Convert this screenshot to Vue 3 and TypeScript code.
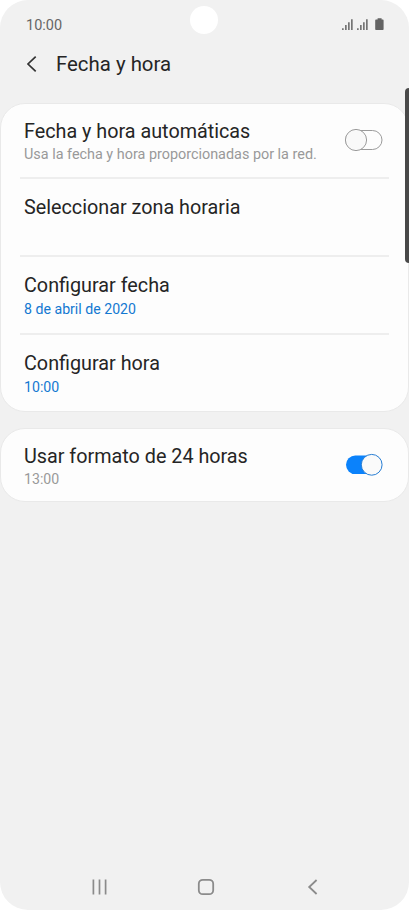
<script setup lang="ts">
interface Setting {
  id: string
  title: string
  detail: string
  accent?: boolean
  on?: boolean
}

const groups: Setting[][] = [
  [
    { id: 'auto', title: 'Fecha y hora automáticas', detail: 'Usa la fecha y hora proporcionadas por la red.', on: false },
    { id: 'zone', title: 'Seleccionar zona horaria', detail: '' },
    { id: 'date', title: 'Configurar fecha', detail: '8 de abril de 2020', accent: true },
    { id: 'time', title: 'Configurar hora', detail: '10:00', accent: true },
  ],
  [{ id: 'format', title: 'Usar formato de 24 horas', detail: '13:00', on: true }],
]
</script>

<template>
  <div class="phone">
    <div class="status">
      <span class="clock">10:00</span>
      <svg class="indicators" width="44" height="14" viewBox="0 0 44 14">
        <g fill="#757575">
          <path d="M1 10.2h1.7V12H1zM4 7.1h1.7V12H4zM7 4.2h1.7V12H7zM10 1.2h1.7V12H10z" />
          <path d="M16 10.2h1.7V12H16zM19 7.1h1.7V12H19zM22 4.2h1.7V12H22zM25 1.2h1.7V12H25z" />
        </g>
        <path fill="#636363" d="M36.6 .3h4v1.3h1.2q.8 0 .8.8v8.8q0 .8-.8.8h-6.8q-.8 0-.8-.8V2.400q0-.8.8-.8h1.6z" />
      </svg>
    </div>
    <div class="camera"></div>
    <div class="edge"></div>

    <header class="header">
      <svg class="back" width="12" height="18" viewBox="0 0 12 18">
        <path d="M9.700 1.700 2 9l7.700 7.300" fill="none" stroke="#333" stroke-width="1.700" />
      </svg>
      <h1>Fecha y hora</h1>
    </header>

    <main class="groups">
      <section v-for="(group, i) in groups" :key="i" class="card">
        <div v-for="item in group" :key="item.id" class="row" :class="'row-' + item.id">
          <div class="texts">
            <div class="title">{{ item.title }}</div>
            <div class="detail" :class="{ accent: item.accent }">{{ item.detail }}</div>
          </div>
          <svg v-if="item.on !== undefined" class="switch" width="40" height="24" viewBox="0 0 40 24">
            <template v-if="item.on">
              <rect x="2" y="2.500" width="36" height="18.600" rx="9.300" fill="#0b82fb" />
              <circle cx="27.700" cy="11.800" r="10.400" fill="#fafafa" stroke="#2a7fd4" stroke-width="1" />
            </template>
            <template v-else>
              <rect x="1.700" y="2.500" width="36.300" height="19" rx="9.500" fill="#fdfdfd" stroke="#9b9b9b" stroke-width="1" />
              <circle cx="12" cy="12" r="10.600" fill="#f9f9f9" stroke="#9b9b9b" stroke-width="1" />
            </template>
          </svg>
        </div>
      </section>
    </main>

    <nav class="nav">
      <svg width="18" height="18" viewBox="0 0 18 18">
        <path d="M2.400 1.500v15M8.500 1.500v15M14.600 1.500v15" fill="none" stroke="#8b8b8b" stroke-width="1.700" />
      </svg>
      <svg width="18" height="18" viewBox="0 0 18 18">
        <rect x="1.800" y="1.800" width="14.400" height="14.400" rx="4" fill="none" stroke="#8b8b8b" stroke-width="1.800" />
      </svg>
      <svg width="18" height="18" viewBox="0 0 18 18">
        <path d="M13.600 2 6.200 9l7.400 7" fill="none" stroke="#8b8b8b" stroke-width="1.800" />
      </svg>
    </nav>
  </div>
</template>

<style>
body {
  background: #fff;
}
</style>

<style scoped>
.phone {
  position: relative;
  display: flex;
  flex-direction: column;
  width: 409px;
  height: 910px;
  overflow: hidden;
  background: #f1f1f1;
  border-radius: 28px;
  font-family: Roboto, sans-serif;
  color: #252525;
}
.status {
  display: flex;
  justify-content: space-between;
  align-items: flex-start;
  height: 48px;
  padding: 17px 24px 0 26px;
  box-sizing: border-box;
}
.clock {
  font-size: 14.5px;
  line-height: 17px;
  color: #666;
}
.indicators {
  margin-top: 1px;
}
.camera {
  position: absolute;
  left: 190px;
  top: 6px;
  width: 28px;
  height: 28px;
  border-radius: 50%;
  background: #fff;
}
.edge {
  position: absolute;
  z-index: 1;
  left: 405px;
  top: 88px;
  width: 8px;
  height: 175px;
  border-radius: 4px;
  background: #494949;
}
.header {
  display: flex;
  align-items: center;
  height: 32px;
  padding-left: 26px;
}
.back {
  margin-top: -1px;
}
h1 {
  margin: 0 0 0 18px;
  font-size: 20.4px;
  font-weight: 400;
  line-height: 32px;
}
.groups {
  display: flex;
  flex-direction: column;
  gap: 16px;
  padding-top: 23px;
}
.card {
  box-sizing: border-box;
  border: 1px solid #e9e9e9;
  border-radius: 25px;
  background: #fdfdfd;
  padding: 0 19px;
}
.row {
  display: flex;
  justify-content: space-between;
  box-sizing: border-box;
  height: 78px;
  padding: 17px 5px 0 4px;
}
.row + .row {
  border-top: 2px solid #eee;
}
.row-auto {
  height: 73px;
  padding-top: 16px;
}
.row-format {
  height: 72px;
  padding-top: 16px;
}
.title {
  font-size: 19.78px;
  line-height: 24px;
  white-space: nowrap;
}
.detail {
  margin-top: 3px;
  font-size: 14.15px;
  line-height: 17px;
  color: #999;
  white-space: nowrap;
}
.row-auto .detail {
  margin-top: 2px;
  font-size: 14.4px;
}
.row-format .detail {
  margin-top: 2px;
}
.detail.accent {
  color: #1378d1;
}
.switch {
  margin-top: 8px;
}
.nav {
  display: flex;
  justify-content: space-between;
  margin-top: auto;
  padding: 0 88px 14px 91px;
}
</style>
